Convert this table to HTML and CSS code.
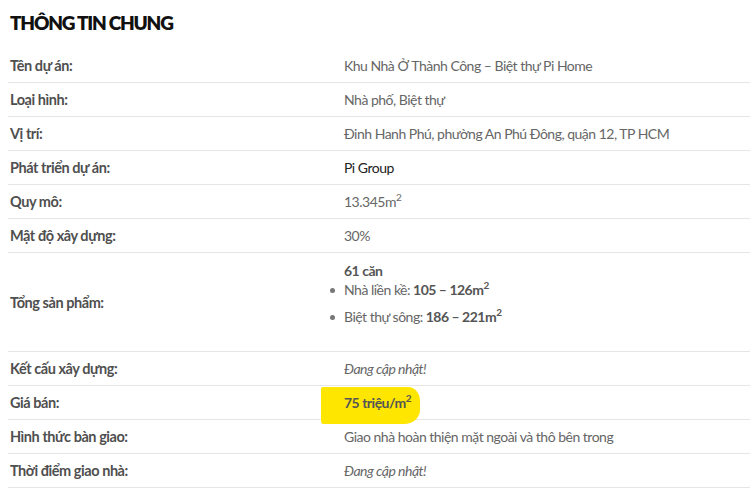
FILE: index.html
```html
<!DOCTYPE html>
<html lang="vi">
<head>
<meta charset="utf-8">
<link rel="stylesheet" href="styles.css">
</head>
<body>
<div class="info">
  <h2 class="title">THÔNG TIN CHUNG</h2>
  <table class="spec">
    <tr><td class="k">Tên dự án:</td><td class="v">Khu Nhà Ở Thành Công – Biệt thự Pi Home</td></tr>
    <tr><td class="k">Loại hình:</td><td class="v">Nhà phố, Biệt thự</td></tr>
    <tr><td class="k">Vị trí:</td><td class="v">Đinh Hanh Phú, phường An Phú Đông, quận 12, TP HCM</td></tr>
    <tr><td class="k">Phát triển dự án:</td><td class="v dark">Pi Group</td></tr>
    <tr><td class="k">Quy mô:</td><td class="v">13.345m<sup>2</sup></td></tr>
    <tr><td class="k">Mật độ xây dựng:</td><td class="v">30%</td></tr>
    <tr class="tall"><td class="k">Tổng sản phẩm:</td><td class="v">
      <p class="lead"><b>61 căn</b></p>
      <ul class="list">
        <li>Nhà liền kề: <b>105 – 126m<sup>2</sup></b></li>
        <li>Biệt thự sông: <b>186 – 221m<sup>2</sup></b></li>
      </ul>
    </td></tr>
    <tr><td class="k">Kết cấu xây dựng:</td><td class="v"><i>Đang cập nhật!</i></td></tr>
    <tr><td class="k">Giá bán:</td><td class="v"><span class="hl"><b>75 triệu/m<sup>2</sup></b></span></td></tr>
    <tr><td class="k">Hình thức bàn giao:</td><td class="v">Giao nhà hoàn thiện mặt ngoài và thô bên trong</td></tr>
    <tr><td class="k">Thời điểm giao nhà:</td><td class="v"><i>Đang cập nhật!</i></td></tr>
  </table>
</div>
</body>
</html>
```
FILE: styles.css
```css
html, body { margin: 0; padding: 0; background: #fff; }
body {
  font-family: Lato, "Liberation Sans", sans-serif;
  color: #666;
  overflow: hidden;
}
.info { margin-left: 8px; width: 742px; padding-top: 13px; }
.title {
  margin: 0 0 16px 2px;
  font-size: 19px;
  line-height: 20px;
  font-weight: 800;
  letter-spacing: -1.2px;
  color: #111;
}
.spec { width: 742px; border-collapse: collapse; font-size: 14px; letter-spacing: -0.5px; }
.spec tr { border-bottom: 1px solid #e6e6e6; }
.spec td { height: 33px; padding: 0; vertical-align: middle; }
.k { width: 334px; padding-left: 2px !important; color: #4f4f4f; font-weight: bold; font-size: 14.5px; letter-spacing: -0.45px; }
.v { color: #666; }
.v b { color: #555; }
.dark { color: #222; }
.tight { letter-spacing: -0.8px; }
sup { font-size: 10px; line-height: 0; vertical-align: 6px; letter-spacing: 0; }
.tall td { height: auto; }
.tall .v { padding: 8px 0 !important; vertical-align: top; }
.lead { margin: 0; line-height: 19px; }
.list { margin: 0 0 17px 0; padding-left: 0; list-style: none; }
.list li { position: relative; line-height: 19px; margin-bottom: 8px; }
.list li::before {
  content: ""; position: absolute; left: -14px; top: 8px;
  width: 5px; height: 5px; border-radius: 50%; background: #777;
}
.hl { position: relative; display: inline-block; z-index: 0; }
.hl::before {
  content: ""; position: absolute; z-index: -1;
  left: -23px; top: -7px; width: 99px; height: 37px;
  background: #ffe600;
  border-radius: 2px 12px 16px 2px / 2px 14px 14px 4px;
}
.hl b { color: #555; }
```
